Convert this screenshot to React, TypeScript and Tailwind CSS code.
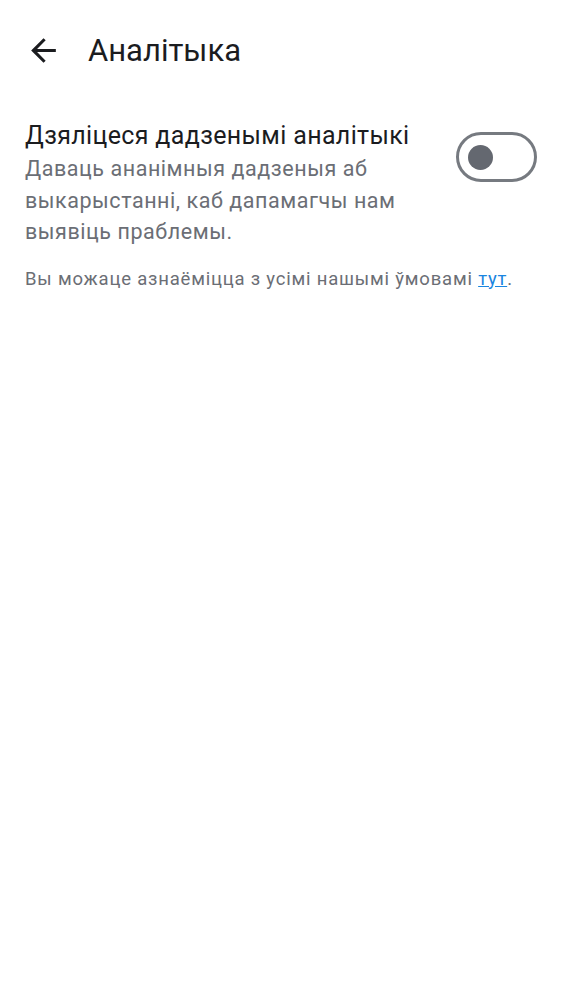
import React, { useState } from "react";

export default function App() {
  const [on, setOn] = useState(false);

  return (
    <div className="min-h-screen w-full bg-white" style={{ fontFamily: "Roboto, 'Noto Sans', sans-serif" }}>
      {/* Toolbar */}
      <header className="flex h-[100px] items-center pl-[25px]">
        <button className="flex h-[37px] w-[37px] items-center justify-center text-[#1b1c1f]">
          <svg width="37" height="37" viewBox="0 0 24 24" fill="currentColor">
            <path d="M20 11H7.83l5.59-5.59L12 4l-8 8 8 8 1.41-1.41L7.83 13H20v-2z" />
          </svg>
        </button>
        <h1 className="ml-[26px] text-[31px] leading-none text-[#1b1c1f]">Аналітыка</h1>
      </header>

      {/* Setting row */}
      <div className="mt-[20px] flex items-start justify-between pl-[25px] pr-[25px]">
        <div className="w-[405px]">
          <div className="text-[25px] leading-[32px] tracking-[0.35px] text-[#1b1c1f]">Дзяліцеся дадзенымі аналітыкі</div>
          <div className="mt-[1px] text-[21.5px] leading-[31.5px] tracking-[0.55px] text-[#6b6e75]">
            Даваць ананімныя дадзеныя аб выкарыстанні, каб дапамагчы нам выявіць праблемы.
          </div>
        </div>
        <button
          onClick={() => setOn(!on)}
          className="mt-[12px] flex h-[50px] w-[81px] shrink-0 items-center rounded-full border-[3px] border-[#767a80] bg-white px-[9px]"
        >
          <span className="h-[25px] w-[25px] rounded-full bg-[#646870]" />
        </button>
      </div>

      {/* Footer note */}
      <p className="mt-[18px] px-[25px] text-[18.5px] leading-[26px] tracking-[0.8px] text-[#6b6e75]">
        Вы можаце азнаёміцца з усімі нашымі ўмовамі{" "}
        <a className="text-[#1a85e0] underline" href="#">тут</a>.
      </p>
    </div>
  );
}
